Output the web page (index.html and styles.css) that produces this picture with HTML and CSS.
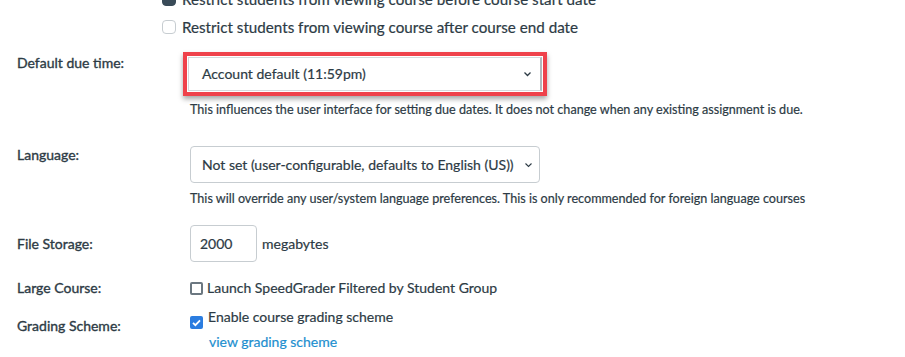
FILE: index.html
```html
<!DOCTYPE html>
<html lang="en">
<head>
  <meta charset="UTF-8">
  <meta name="viewport" content="width=device-width, initial-scale=1.0">
  <title>Course Settings</title>
  <link rel="stylesheet" href="styles.css">
</head>
<body>
  <div class="page">

    <!-- Participation restrictions -->
    <div class="access">
      <div class="check-row">
        <span class="box box-dark"></span>
        Restrict students from viewing course before course start date
      </div>
      <div class="check-row">
        <span class="box"></span>
        Restrict students from viewing course after course end date
      </div>
    </div>

    <!-- Default due time -->
    <div class="field field-due">
      <div class="field-label">Default due time:</div>
      <div class="field-body">
        <div class="highlight">
          <div class="select select-due">
            <span>Account default (11:59pm)</span>
            <svg class="chevron" width="9" height="6" viewBox="0 0 9 6"><path d="M1.5 1.5l3 3 3-3" fill="none" stroke="#2d3b45" stroke-width="1.3"/></svg>
          </div>
        </div>
        <p class="hint hint-due">This influences the user interface for setting due dates. It does not change when any existing assignment is due.</p>
      </div>
    </div>

    <!-- Language -->
    <div class="field field-lang">
      <div class="field-label">Language:</div>
      <div class="field-body">
        <div class="select select-lang">
          <span>Not set (user-configurable, defaults to English (US))</span>
          <svg class="chevron" width="9" height="6" viewBox="0 0 9 6"><path d="M1.5 1.5l3 3 3-3" fill="none" stroke="#2d3b45" stroke-width="1.1"/></svg>
        </div>
        <p class="hint hint-lang">This will override any user/system language preferences. This is only recommended for foreign language courses</p>
      </div>
    </div>

    <!-- File storage -->
    <div class="field field-storage">
      <div class="field-label">File Storage:</div>
      <div class="field-body inline">
        <div class="text-input">2000</div>
        <span class="unit">megabytes</span>
      </div>
    </div>

    <!-- Large course -->
    <div class="field field-large">
      <div class="field-label">Large Course:</div>
      <div class="field-body inline">
        <span class="box box-square"></span>
        <span class="check-text">Launch SpeedGrader Filtered by Student Group</span>
      </div>
    </div>

    <!-- Grading scheme -->
    <div class="field field-grading">
      <div class="field-label">Grading Scheme:</div>
      <div class="field-body">
        <div class="grading-line">
          <span class="box box-checked">
            <svg width="13" height="13" viewBox="0 0 13 13"><path d="M3 6.8l2.4 2.4L10 4.3" fill="none" stroke="#fff" stroke-width="1.8"/></svg>
          </span>
          <span class="check-text">Enable course grading scheme</span>
        </div>
        <a class="link" href="#">view grading scheme</a>
      </div>
    </div>

  </div>
</body>
</html>
```

FILE: styles.css
```css
/* General Styles */
body {
  margin: 0;
  background: #fff;
  color: #2d3b45;
  font-family: Lato, "Open Sans", sans-serif;
  font-size: 14px;
  line-height: 18px;
  -webkit-text-stroke: 0.2px;
  overflow: hidden;
}

.page {
  padding-left: 17px;
}

/* Checkboxes */
.box {
  display: inline-block;
  flex-shrink: 0;
  width: 14px;
  height: 14px;
  box-sizing: border-box;
  border: 1px solid #c7cdd1;
  border-radius: 4px;
  background: #fff;
}

.box-dark {
  background: #394b58;
  border-color: #394b58;
}

.box-square {
  width: 13px;
  height: 13px;
  border: 2px solid #6b7780;
  border-radius: 2px;
}

.box-checked {
  width: 13px;
  height: 13px;
  border: none;
  border-radius: 2px;
  background: #2b7de0;
}

.box-checked svg {
  display: block;
}

/* Access restrictions */
.access {
  margin-top: -15px;
  padding-left: 145px;
  font-size: 15.2px;
}

.check-row {
  display: flex;
  align-items: center;
  gap: 6px;
  height: 28px;
}

/* Form rows */
.field {
  display: flex;
}

.field-label {
  width: 173px;
  flex-shrink: 0;
  -webkit-text-stroke: 0.35px;
}

.field-body.inline {
  display: flex;
  align-items: center;
}

.hint {
  margin: 0;
  font-size: 12.6px;
  line-height: 16px;
}

/* Selects */
.select {
  position: relative;
  display: flex;
  align-items: center;
  box-sizing: border-box;
  border: 1px solid #c7cdd1;
  border-radius: 4px;
  background: #fff;
}

.chevron {
  position: absolute;
  top: 50%;
  margin-top: -3px;
}

/* Default due time */
.field-due {
  margin-top: 11px;
}

.field-due .field-label {
  padding-top: 2px;
}

.highlight {
  display: inline-block;
  margin-left: -7px;
  padding: 1px;
  border: 4px solid #ef424b;
  box-shadow: 0 3px 5px rgba(0, 0, 0, 0.35);
}

.select-due {
  width: 354px;
  height: 34px;
  padding-left: 13px;
  border-radius: 0;
  border-color: #d5d9dc;
  border-right: 2px solid #b4b9bd;
}

.select-due .chevron {
  right: 8px;
}

.hint-due {
  margin-top: 6px;
}

/* Language */
.field-lang {
  margin-top: 28px;
}

.select-lang {
  width: 350px;
  height: 37px;
  padding-left: 11px;
}

.select-lang .chevron {
  right: 6px;
}

.hint-lang {
  margin-top: 8px;
}

/* File storage */
.field-storage {
  margin-top: 18px;
  align-items: center;
}

.text-input {
  box-sizing: border-box;
  width: 67px;
  height: 37px;
  padding-left: 9px;
  border: 1px solid #c7cdd1;
  border-radius: 4px;
  display: flex;
  align-items: center;
}

.unit {
  margin-left: 5px;
}

/* Large course */
.field-large {
  margin-top: 17px;
}

.field-large .check-text {
  margin-left: 4px;
}

/* Grading scheme */
.field-grading {
  margin-top: 11px;
}

.field-grading .field-label {
  padding-top: 9px;
}

.grading-line {
  display: flex;
  align-items: flex-start;
}

.grading-line .box {
  margin-top: 8px;
}

.grading-line .check-text {
  margin-left: 5px;
}

.link {
  display: block;
  margin-top: 4px;
  padding-left: 19px;
  color: #1e8fcf;
  text-decoration: none;
}
```
